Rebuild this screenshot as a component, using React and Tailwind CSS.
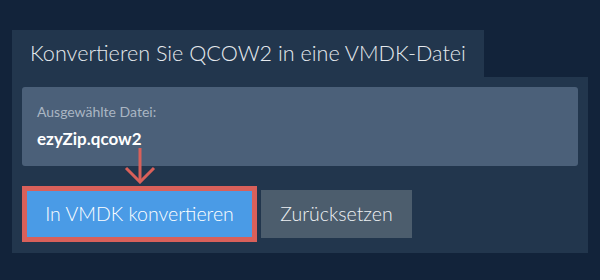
export default function App() {
  return (
    <div className="w-[600px] h-[280px] bg-[#12233a] pl-[12px] pt-[30px]" style={{ fontFamily: 'Lato, "Noto Sans", sans-serif' }}>
      <div className="inline-flex items-center h-[47px] px-[18px] bg-[#22364d]">
        <span className="text-[21.6px] font-light text-[#e6eaee] leading-none">Konvertieren Sie QCOW2 in eine VMDK-Datei</span>
      </div>
      <div className="relative w-[576px] bg-[#22364d] pt-[10px] pl-[10px] pb-[11px]">
        <div className="w-[556px] h-[79px] rounded-[3px] bg-[#4b6079] pl-[15px] pt-[17px]">
          <div className="text-[14px] text-[#aab6c3] leading-[16px]">Ausgewählte Datei:</div>
          <div className="mt-[9px] text-[17px] font-bold text-white leading-[20px]">ezyZip.qcow2</div>
        </div>
        <div className="mt-[20px] flex items-center gap-[4px]">
          <div className="p-[5px] bg-[#d9605a]">
            <button className="w-[225px] h-[46px] bg-[#4a9be6] text-white text-[19.5px] font-light text-center">In VMDK konvertieren</button>
          </div>
          <button className="w-[151px] h-[48px] bg-[#4c5d6d] text-[#eef1f4] text-[19.5px] font-light text-center">Zurücksetzen</button>
        </div>
        <svg className="absolute left-[112px] top-[71px]" width="32" height="36" viewBox="0 0 32 36" fill="none">
          <path d="M16 0 V34" stroke="#d9605a" strokeWidth="3" />
          <path d="M2 20 L16 34 L30 20" stroke="#d9605a" strokeWidth="3" strokeLinejoin="miter" />
        </svg>
      </div>
    </div>
  );
}
